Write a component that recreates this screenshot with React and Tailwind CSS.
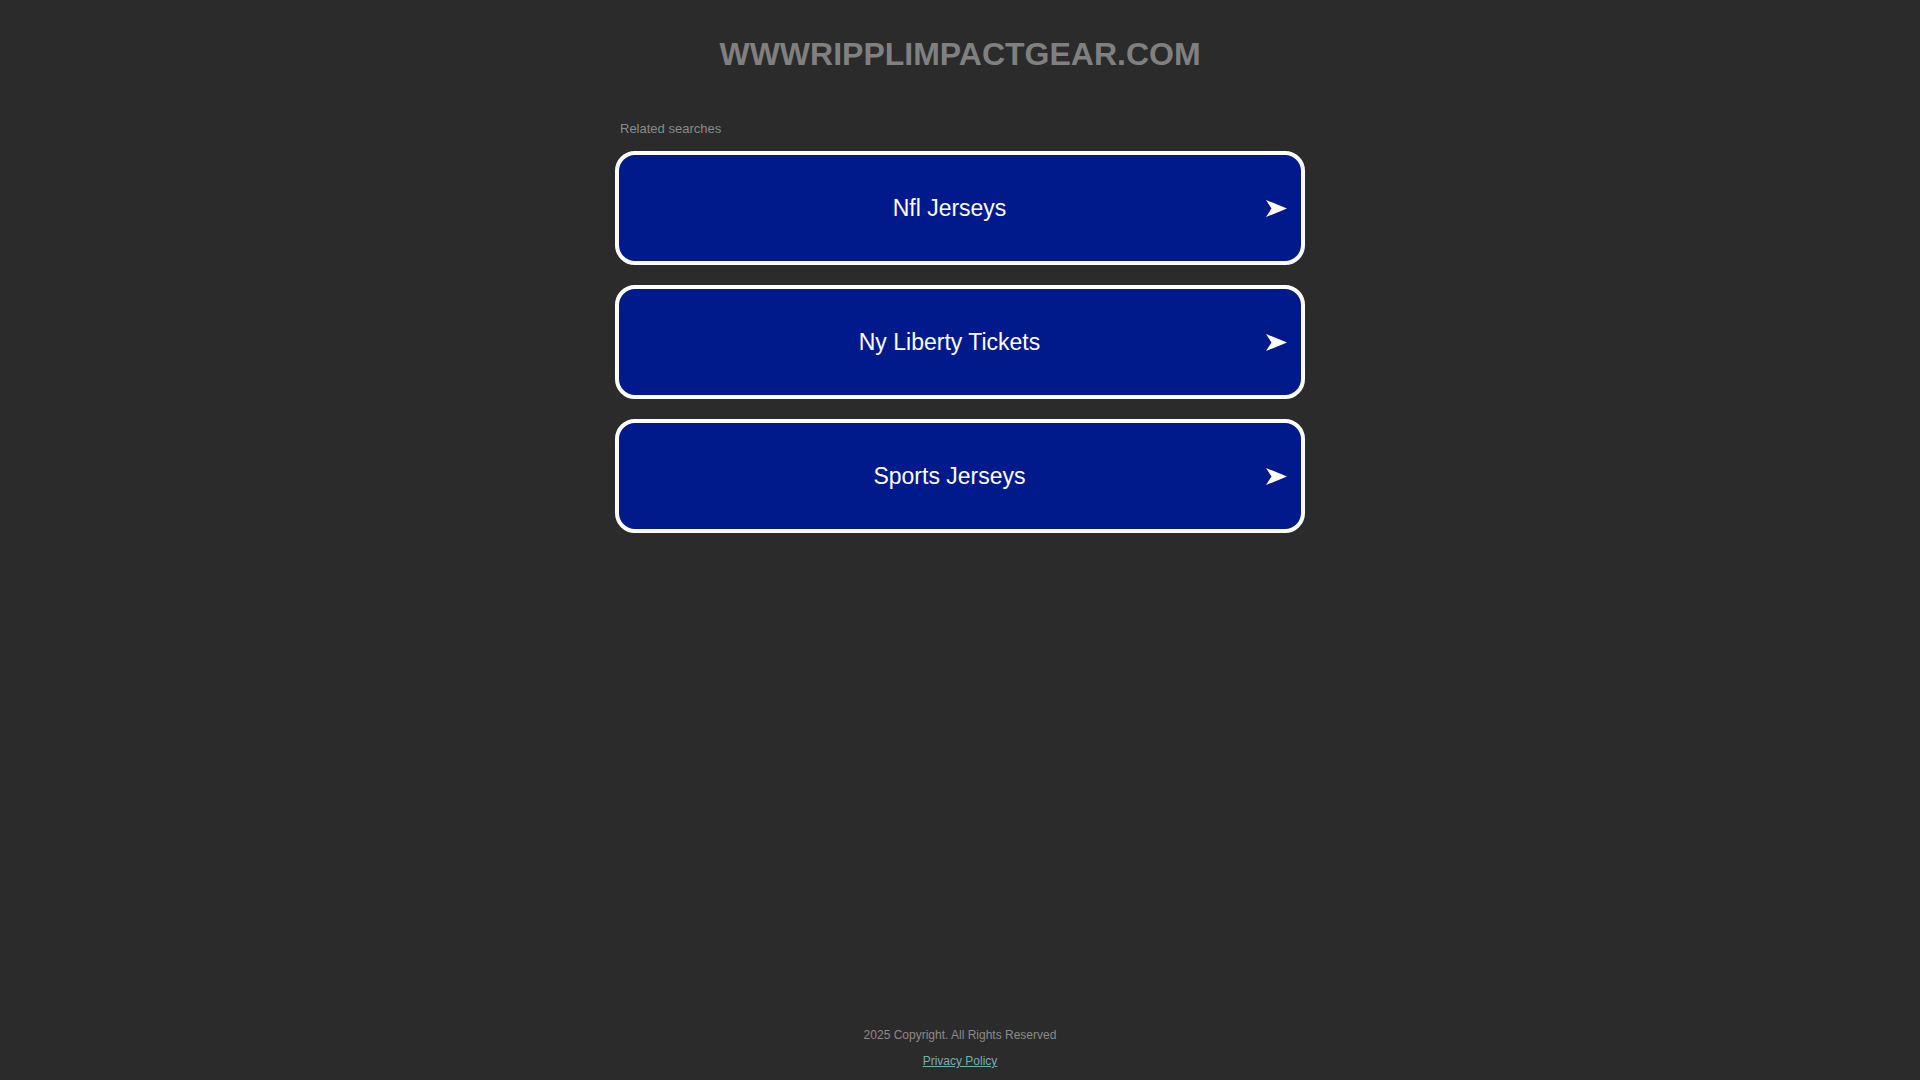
import React from "react";

const searches = ["Nfl Jerseys", "Ny Liberty Tickets", "Sports Jerseys"];

function Arrow() {
  return (
    <svg width="21" height="17" viewBox="0 0 21 17" className="shrink-0 mt-[2px]">
      <polygon points="0,0 21,8.5 0,17 5.5,8.5" fill="#ffffff" />
    </svg>
  );
}

function SearchCard({ label }) {
  return (
    <a
      href="#"
      className="flex items-center h-[114px] px-[14px] bg-[#011a8b] border-4 border-white rounded-[20px] text-white no-underline"
    >
      <span className="flex-1 text-center text-[23px] leading-none pt-[2px]">{label}</span>
      <Arrow />
    </a>
  );
}

export default function App() {
  return (
    <div className="min-h-screen flex flex-col bg-[#2b2b2b] font-['Liberation_Sans',Arial,sans-serif]">
      {/* Header */}
      <div className="pt-[36px] text-center">
        <h1 className="text-[32px] leading-[1.15] font-bold text-[#808080]">
          WWWRIPPLIMPACTGEAR.COM
        </h1>
      </div>

      {/* Related searches */}
      <div className="w-[690px] mx-auto mt-[48px]">
        <p className="pl-[5px] text-[13px] leading-[15px] text-[#8a8a8a]">
          Related searches
        </p>
        <div className="mt-[15px] flex flex-col gap-[20px]">
          {searches.map((s) => (
            <SearchCard key={s} label={s} />
          ))}
        </div>
      </div>

      {/* Footer */}
      <div className="mt-auto pb-[12px] flex flex-col items-center gap-[12px] text-[12px] leading-[14px]">
        <span className="text-[#8a8a8a]">2025 Copyright. All Rights Reserved</span>
        <a href="#" className="text-[#6fb1b1] underline">
          Privacy Policy
        </a>
      </div>
    </div>
  );
}
